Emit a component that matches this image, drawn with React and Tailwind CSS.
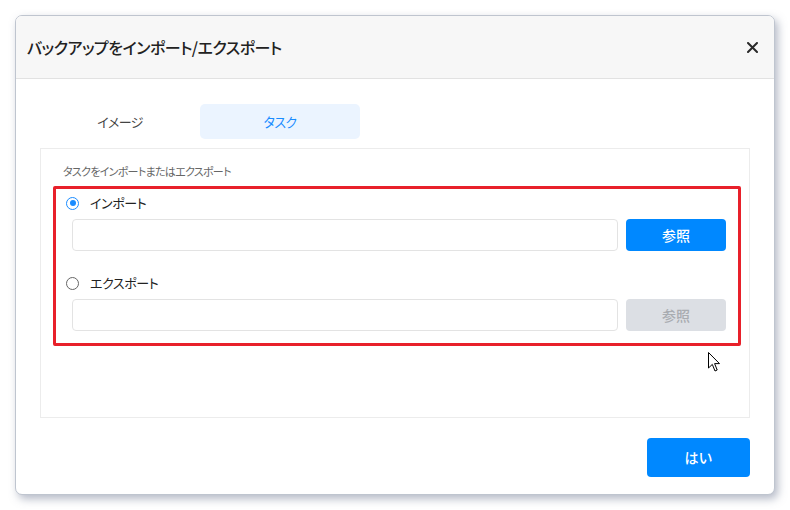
import React, { useState } from 'react';

const jp = { fontFamily: '"Noto Sans CJK JP", "Noto Sans", sans-serif' };

const Radio = ({ checked, label, onClick }) => (
  <button onClick={onClick} className="flex items-center gap-[11px] h-[18px]">
    <span
      className={`w-[13px] h-[13px] rounded-full border-[1.5px] flex items-center justify-center ${
        checked ? 'border-[#1a8cff]' : 'border-[#666]'
      }`}
    >
      {checked && <span className="w-[6px] h-[6px] rounded-full bg-[#1a8cff]"></span>}
    </span>
    <span className="text-[13px] tracking-[-0.4px] text-[#222] [font-feature-settings:'palt']">{label}</span>
  </button>
);

const PathRow = ({ enabled }) => (
  <div className="flex gap-[8px] pl-[6px]">
    <input
      type="text"
      disabled={!enabled}
      className="flex-1 h-[32px] border border-[#e3e3e3] rounded-[4px] bg-white outline-none px-2"
    />
    <button
      disabled={!enabled}
      className={`w-[100px] h-[32px] rounded-[4px] text-[14px] font-medium ${
        enabled ? 'bg-[#0088ff] text-white' : 'bg-[#dcdfe4] text-[#a9acb1]'
      }`}
    >
      参照
    </button>
  </div>
);

export default function App() {
  const [tab, setTab] = useState('task');
  const [mode, setMode] = useState('import');

  return (
    <div className="w-[790px] h-[510px] bg-white relative" style={jp}>
      <div className="absolute left-[15px] top-[15px] w-[760px] h-[480px] bg-white rounded-[7px] border border-[#bfc5cf] shadow-[3px_4px_9px_rgba(110,120,145,0.5)] flex flex-col overflow-hidden">
        {/* header */}
        <div className="h-[63px] shrink-0 bg-[#f7f7f7] border-b border-[#e2e2e2] flex items-center justify-between pl-[11px] pr-[14px]">
          <h1 className="text-[16px] tracking-[-0.5px] font-medium text-[#222] [font-feature-settings:'palt']">
            バックアップをインポート/エクスポート
          </h1>
          <button className="w-[16px] h-[16px] flex items-center justify-center">
            <svg width="11" height="11" viewBox="0 0 11 11">
              <path d="M1 1L10 10M10 1L1 10" stroke="#2a2a2a" strokeWidth="2" strokeLinecap="round" />
            </svg>
          </button>
        </div>

        {/* body */}
        <div className="flex-1 flex flex-col px-[24px] pt-[25px]">
          <div className="flex">
            <button
              onClick={() => setTab('image')}
              className={`w-[160px] h-[35px] rounded-[5px] text-[13px] tracking-[-0.6px] [font-feature-settings:'palt'] ${
                tab === 'image' ? 'bg-[#ebf4ff] text-[#1a8cff]' : 'text-[#444]'
              }`}
            >
              イメージ
            </button>
            <button
              onClick={() => setTab('task')}
              className={`w-[160px] h-[35px] rounded-[5px] text-[13px] tracking-[-0.6px] [font-feature-settings:'palt'] ${
                tab === 'task' ? 'bg-[#ebf4ff] text-[#1a8cff]' : 'text-[#444]'
              }`}
            >
              タスク
            </button>
          </div>

          <div className="mt-[9px] h-[270px] border border-[#ececec] pt-[14px] pl-[12px] pr-[8px]">
            <p className="pl-[10px] text-[11px] tracking-[-0.7px] leading-[16px] text-[#666] [font-feature-settings:'palt']">
              タスクをインポートまたはエクスポート
            </p>
            <div className="mt-[7px] border-[3px] border-[#e8202a] rounded-[2px] pt-[5px] pb-[12px] pl-[10px] pr-[12px]">
              <Radio checked={mode === 'import'} label="インポート" onClick={() => setMode('import')} />
              <div className="mt-[7px]">
                <PathRow enabled={mode === 'import'} />
              </div>
              <div className="mt-[23px]">
                <Radio checked={mode === 'export'} label="エクスポート" onClick={() => setMode('export')} />
              </div>
              <div className="mt-[7px]">
                <PathRow enabled={mode === 'export'} />
              </div>
            </div>
          </div>

          <div className="flex justify-end mt-[20px]">
            <button className="w-[103px] h-[39px] rounded-[4px] bg-[#0088ff] text-white text-[14px] font-medium">
              はい
            </button>
          </div>
        </div>
      </div>

      {/* mouse pointer */}
      <svg className="absolute left-[708px] top-[352px]" width="13" height="21" viewBox="0 0 13 21">
        <path
          d="M0.5 0.5L0.5 16L4.3 12.4L7 19L9.2 18L6.6 11.6L11.5 11.6Z"
          fill="white"
          stroke="black"
          strokeWidth="1"
          strokeLinejoin="miter"
        />
      </svg>
    </div>
  );
}
